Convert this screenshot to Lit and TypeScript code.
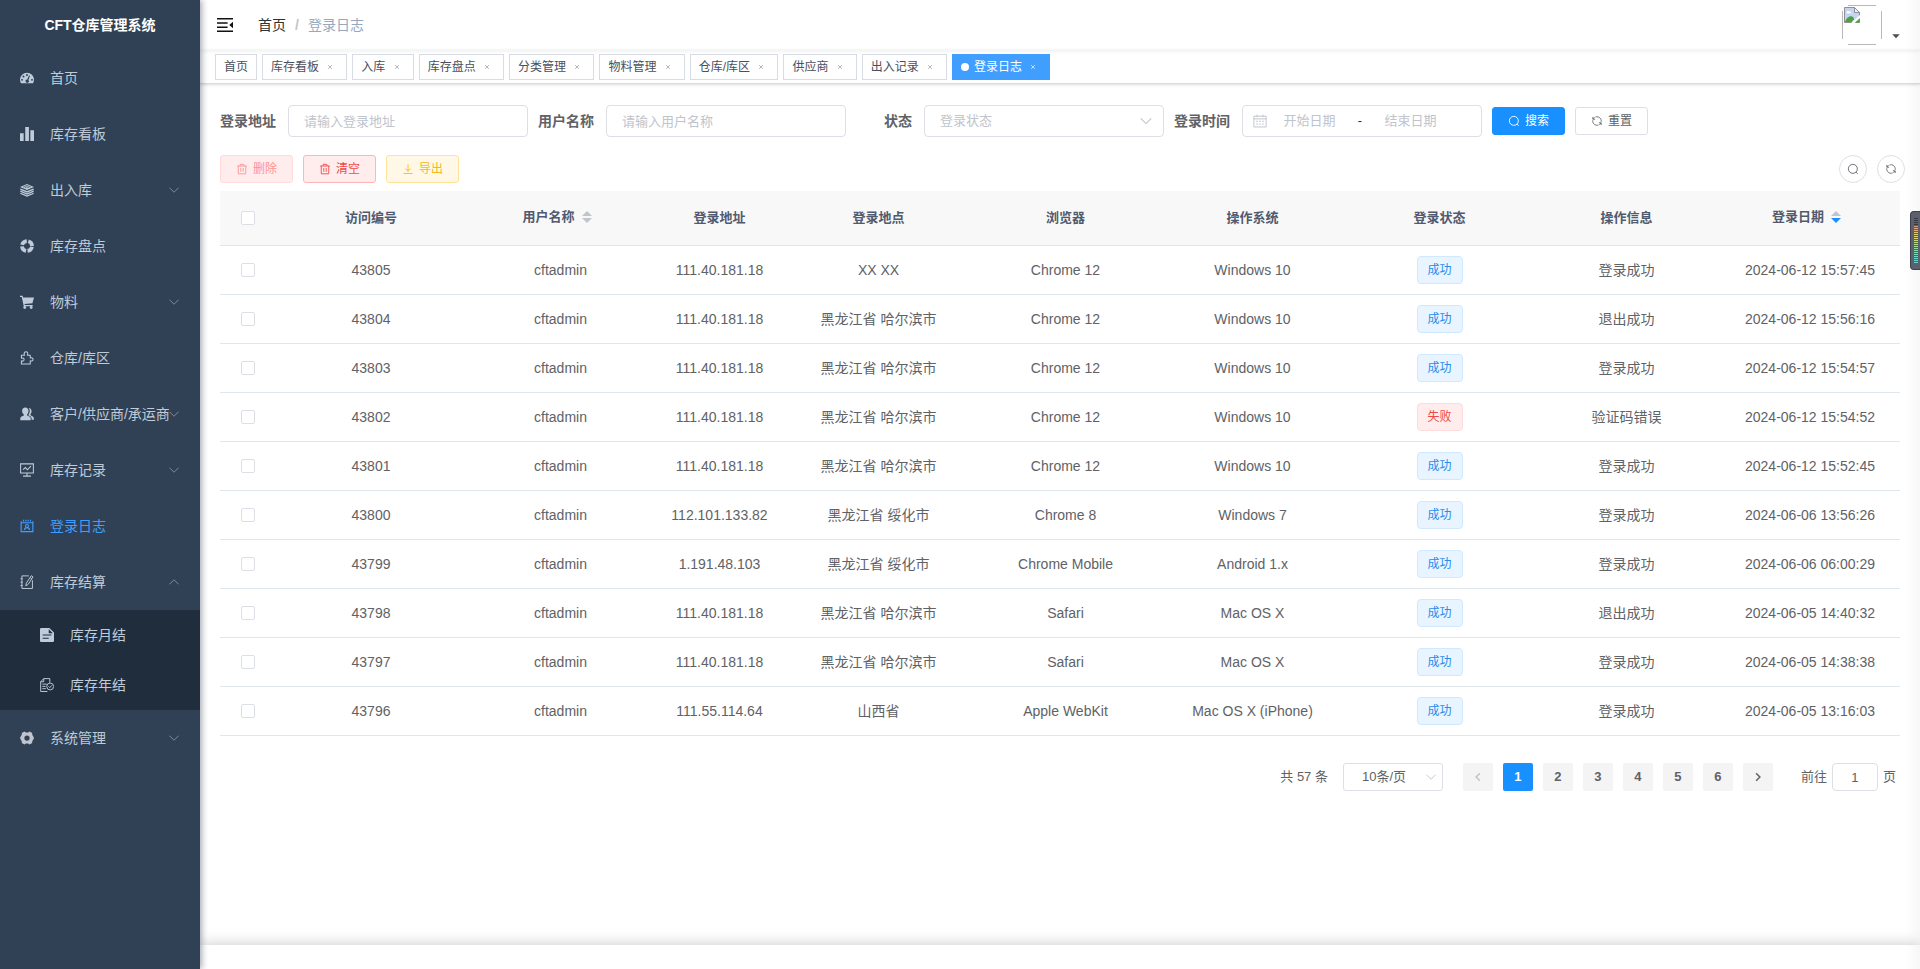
import { LitElement, html, css, svg, nothing } from 'lit';
import { customElement, state } from 'lit/decorators.js';
import { classMap } from 'lit/directives/class-map.js';

const icons: Record<string, unknown> = {
  dashboard: svg`<path fill="currentColor" fill-rule="evenodd" d="M8 2a8 8 0 0 0-8 8c0 1.500.4 2.800 1.100 4h13.800c.7-1.200 1.100-2.500 1.100-4a8 8 0 0 0-8-8zM8 3.400a1.100 1.100 0 1 1 0 2.200 1.100 1.100 0 0 1 0-2.200zM4 5.100a1.100 1.100 0 1 1 0 2.200 1.100 1.100 0 0 1 0-2.200zM2.300 9a1.100 1.100 0 1 1 0 2.200 1.100 1.100 0 0 1 0-2.200zM13.700 9a1.100 1.100 0 1 1 0 2.200 1.100 1.100 0 0 1 0-2.200zM10.300 5l1.100.5-1.800 4.700a1.900 1.900 0 1 1-1.300-.5z"/>`,
  bars: svg`<path fill="currentColor" d="M0 7h4.200v9H0zM6 0h4.200v16H6zM11.800 3.600H16V16h-4.200z"/>`,
  layers: svg`<path fill="currentColor" d="M8 1l8 3.500L8 8 0 4.500z"/><path fill="none" stroke="currentColor" stroke-width="1.500" d="M.4 6.900L8 10.200l7.600-3.300M.4 9.400L8 12.700l7.600-3.300M.4 11.700L8 15l7.600-3.300"/><path fill="none" stroke="#304156" stroke-width=".7" d="M3.500 4.600L8 2.700l4.500 1.900M5.500 5.500L8 4.400l2.500 1.100"/>`,
  ring: svg`<circle cx="8" cy="8" r="5.700" fill="none" stroke="currentColor" stroke-width="4.300" stroke-dasharray="7.150 1.800" stroke-dashoffset="-.9"/>`,
  cart: svg`<path fill="currentColor" d="M0 .8h3l.6 2H16l-1.800 6.600-9 .9.3 1.200h9v1.400H4.300L2 2.300H0z"/><circle cx="5.400" cy="14.300" r="1.600" fill="currentColor"/><circle cx="12.800" cy="14.300" r="1.600" fill="currentColor"/>`,
  puzzle: svg`<path fill="none" stroke="currentColor" stroke-width="1.200" stroke-linejoin="round" d="M1.600 4.800h3.600c-1.200-2 0-3.900 1.600-3.900s2.800 1.900 1.600 3.900h3.300v3.300c1.600-.9 3.200 0 3.200 1.500s-1.600 2.500-3.200 1.500v3.800H1.600v-3.600c2 .8 3.100-.2 3.100-1.500S3.600 7.500 1.600 8.200z"/>`,
  people: svg`<path fill="currentColor" d="M6 .5c2.300 0 3.700 1.700 3.700 4 0 1.700-.7 3-1.500 3.800v1.400l3 1.500c.8.400 1 1.200 1 2.400v1.600H.3v-1.600c0-1.200.3-2 1-2.400l3-1.500V8.300C3.200 7.500 2.400 6.200 2.400 4.500c0-2.300 1.400-4 3.600-4z"/><path fill="currentColor" d="M10 1.200c2 .1 3.200 1.700 3.200 3.700 0 1.500-.5 2.500-1.200 3.300v1.300l2.700 1.300c.9.500 1.100 1.300 1.100 2.800v1h-2.500c0-2.400-.3-3.400-1.500-4l-2-1V8.700c.8-.9 1.300-2.300 1.300-4 0-1.500-.4-2.700-1.100-3.500z"/>`,
  monitor: svg`<path fill="none" stroke="currentColor" stroke-width="1.200" d="M.7 1h14.600v10.400H.7zM8 11.400v3.200M3.500 15h9M3.500 7.700l2.700-2.500 2.300 2.600 4-4.300"/>`,
  logbook: svg`<path fill="none" stroke="currentColor" stroke-width="1.300" d="M1.300 2.500v12h13.400v-12M1.300 4.300h13.400M4 .8v2M6.700.8v2M9.300.8v2M12 .8v2M1.300 2.500v2M14.700 2.500v2"/><path fill="none" stroke="currentColor" stroke-width="1.300" d="M5 12.500c.3-1.800 1.400-2.700 3-2.700s2.700.900 3 2.700"/><circle cx="8" cy="7.900" r="1.700" fill="none" stroke="currentColor" stroke-width="1.200"/>`,
  edit: svg`<path fill="none" stroke="currentColor" stroke-width="1.100" d="M10 1H2.200v14.400h12V6M.6 4.300H3M.6 8.200H3M.6 12H3M12.900.8l2 1.400-5.600 8.500-2.700 1.700.6-3.100zM11.600 3l1.900 1.300"/>`,
  document: svg`<path fill="currentColor" fill-rule="evenodd" d="M1.500 0h9.200L16 5.200v9.300c0 .8-.7 1.500-1.500 1.500h-13C.7 16 0 15.300 0 14.500v-13C0 .7.700 0 1.500 0zM3 7.300v1.400h10V7.300zM3 11v1.400h7V11zM10 1.400V6h4.600z"/>`,
  docCheck: svg`<path fill="none" stroke="currentColor" stroke-width="1.100" d="M8.500 15.400H.8V4.300L4.300.7h6.900v4.600M4.300.7v3.600H.8M2.700 7h5M2.700 9.600h3.600M2.700 12.200h4"/><circle cx="11.600" cy="9.700" r="3.900" fill="none" stroke="currentColor" stroke-width="1.100"/><path fill="none" stroke="currentColor" stroke-width="1.100" d="M9.800 9.600l1.400 1.400 2.200-2.500"/>`,
  gear: svg`<path fill="#c0c4cc" fill-rule="evenodd" d="M5 .6l1.800 1.100h2.400L11 .6l2.900 1.600.1 2.200 1.200 2 .8 1.600-.8 1.600-1.200 2-.1 2.200-2.900 1.600-1.800-1.100H6.800L5 15.400l-2.900-1.600-.1-2.200-1.200-2L0 8l.8-1.600 1.200-2 .1-2.200zM8 5a3 3 0 1 0 0 6 3 3 0 0 0 0-6z"/>`,
  down: svg`<path fill="none" stroke="currentColor" stroke-width="1.200" d="M2 5l6 6 6-6"/>`,
  up: svg`<path fill="none" stroke="currentColor" stroke-width="1.200" d="M2 11l6-6 6 6"/>`,
  left: svg`<path fill="none" stroke="currentColor" stroke-width="2" d="M10.500 3L5.500 8l5 5"/>`,
  right: svg`<path fill="none" stroke="currentColor" stroke-width="2" d="M5.500 3l5 5-5 5"/>`,
  close: svg`<path fill="none" stroke="currentColor" stroke-width="1.800" d="M3 3l10 10M13 3L3 13"/>`,
  search: svg`<circle cx="7.800" cy="7.800" r="6" fill="none" stroke="currentColor" stroke-width="1.200"/><path stroke="currentColor" stroke-width="1.200" d="M11.800 12l2.500 2.500"/>`,
  refresh: svg`<path fill="none" stroke="currentColor" stroke-width="1.200" d="M6 2.700a5.700 5.700 0 0 1 7.600 6.300M10 13.300A5.700 5.700 0 0 1 2.400 7M2.500 2.600v3h3M13.500 13.400v-3h-3M2.600 5.500c.7-1.200 1.200-1.800 2.200-2.300M13.400 10.500c-.7 1.200-1.200 1.800-2.200 2.300"/>`,
  trash: svg`<path fill="none" stroke="currentColor" stroke-width="1.200" d="M1.500 4h13M5.500 4V1.800h5V4M3 4v10.400h10V4M6.400 6.700v5M9.600 6.700v5"/>`,
  download: svg`<path fill="none" stroke="currentColor" stroke-width="1.200" d="M8 2v9M4.300 7.300L8 11l3.700-3.700M2 14h12"/>`,
  calendar: svg`<path fill="none" stroke="currentColor" stroke-width="1.100" d="M1 2.500h14v12.300H1zM1 5.600h14M4.600.7v3M11.400.7v3M3.600 8.300h2M7 8.300h2M10.400 8.300h2M3.600 11.500h2M7 11.500h2M10.400 11.500h2"/>`,
  fold: svg`<path fill="currentColor" d="M0 1h16v1.600H0zM0 5.200h10.600v1.500H0zM0 9.400h10.600v1.500H0zM0 13.500h16v1.600H0zM16 4.800v6.400L12.300 8z"/>`,
  caret: svg`<path fill="currentColor" d="M3 5.500h10L8 11z"/>`,
};

const icon = (name: string, cls = '') =>
  html`<svg class="icon ${cls}" viewBox="0 0 16 16" aria-hidden="true">${icons[name]}</svg>`;

interface MenuItem {
  label: string;
  icon: string;
  active?: boolean;
  sub?: boolean;
  children?: MenuItem[];
}

const menu: MenuItem[] = [
  { label: '首页', icon: 'dashboard' },
  { label: '库存看板', icon: 'bars' },
  { label: '出入库', icon: 'layers', sub: true },
  { label: '库存盘点', icon: 'ring' },
  { label: '物料', icon: 'cart', sub: true },
  { label: '仓库/库区', icon: 'puzzle' },
  { label: '客户/供应商/承运商', icon: 'people', sub: true },
  { label: '库存记录', icon: 'monitor', sub: true },
  { label: '登录日志', icon: 'logbook', active: true },
  {
    label: '库存结算',
    icon: 'edit',
    sub: true,
    children: [
      { label: '库存月结', icon: 'document' },
      { label: '库存年结', icon: 'docCheck' },
    ],
  },
  { label: '系统管理', icon: 'gear', sub: true },
];

const tabs = ['首页', '库存看板', '入库', '库存盘点', '分类管理', '物料管理', '仓库/库区', '供应商', '出入记录', '登录日志'];

const HEB = '黑龙江省 哈尔滨市';
const SH = '黑龙江省 绥化市';

const logs: [string, string, string, string, string, boolean, string, string][] = [
  ['43805', '111.40.181.18', 'XX XX', 'Chrome 12', 'Windows 10', true, '登录成功', '2024-06-12 15:57:45'],
  ['43804', '111.40.181.18', HEB, 'Chrome 12', 'Windows 10', true, '退出成功', '2024-06-12 15:56:16'],
  ['43803', '111.40.181.18', HEB, 'Chrome 12', 'Windows 10', true, '登录成功', '2024-06-12 15:54:57'],
  ['43802', '111.40.181.18', HEB, 'Chrome 12', 'Windows 10', false, '验证码错误', '2024-06-12 15:54:52'],
  ['43801', '111.40.181.18', HEB, 'Chrome 12', 'Windows 10', true, '登录成功', '2024-06-12 15:52:45'],
  ['43800', '112.101.133.82', SH, 'Chrome 8', 'Windows 7', true, '登录成功', '2024-06-06 13:56:26'],
  ['43799', '1.191.48.103', SH, 'Chrome Mobile', 'Android 1.x', true, '登录成功', '2024-06-06 06:00:29'],
  ['43798', '111.40.181.18', HEB, 'Safari', 'Mac OS X', true, '退出成功', '2024-06-05 14:40:32'],
  ['43797', '111.40.181.18', HEB, 'Safari', 'Mac OS X', true, '登录成功', '2024-06-05 14:38:38'],
  ['43796', '111.55.114.64', '山西省', 'Apple WebKit', 'Mac OS X (iPhone)', true, '登录成功', '2024-06-05 13:16:03'],
];

const reset = css`
  * { box-sizing: border-box; }
  button, input, select { font: inherit; color: inherit; margin: 0; }
  button { cursor: pointer; }
  a { color: inherit; text-decoration: none; }
  .icon { width: 14px; height: 14px; flex: none; display: block; }
`;

@customElement('side-menu')
class SideMenu extends LitElement {
  static styles = [reset, css`
    :host { display: block; background: #304156; color: #bfcbd9; font-size: 14px; box-shadow: 2px 0 6px rgba(0, 21, 41, .35); }
    .logo { margin: 0; height: 50px; line-height: 50px; text-align: center; color: #fff; font-size: 14px; font-weight: bold; }
    ul { list-style: none; margin: 0; padding: 0; }
    .item { display: flex; align-items: center; width: 100%; height: 56px; padding: 0 20px; border: 0; background: none; white-space: nowrap; text-align: left; }
    .item .icon:first-child { margin-right: 16px; }
    .label { flex: 1; width: 0; line-height: 20px; }
    .arrow { width: 12px; height: 12px; color: #8492a2; }
    .active { color: #409eff; }
    .nested { background: #1f2d3d; }
    .nested .item { height: 50px; padding-left: 40px; }
  `];

  row(item: MenuItem): unknown {
    const body = html`${icon(item.icon)}<span class="label">${item.label}</span>`;
    return html`<li>
      ${item.sub
        ? html`<button class="item" type="button" aria-expanded=${item.children ? 'true' : 'false'}>
            ${body}${icon(item.children ? 'up' : 'down', 'arrow')}
          </button>`
        : html`<a class=${classMap({ item: true, active: !!item.active })} href="#">${body}</a>`}
      ${item.children ? html`<ul class="nested">${item.children.map((c) => this.row(c))}</ul>` : nothing}
    </li>`;
  }

  render() {
    return html`<h1 class="logo">CFT仓库管理系统</h1>
      <nav><ul>${menu.map((m) => this.row(m))}</ul></nav>`;
  }
}

@customElement('top-bar')
class TopBar extends LitElement {
  static styles = [reset, css`
    :host { display: block; position: relative; background: #fff; }
    .bar { display: flex; align-items: center; height: 50px; padding: 0 18px 0 17px; box-shadow: 0 1px 4px rgba(0, 21, 41, .08); }
    .fold { border: 0; background: none; padding: 0; color: #111; }
    .fold .icon { width: 16px; height: 16px; }
    .crumbs { display: flex; margin-left: 25px; font-size: 14px; line-height: 20px; color: #97a8be; }
    .crumbs a { color: #303133; }
    .sep { margin: 0 9px; color: #c0c4cc; font-weight: bold; }
    .user { display: flex; align-items: flex-end; gap: 8px; height: 40px; margin-left: auto; border: 0; padding: 0; background: none; color: #4a4f57; }
    .avatar { width: 40px; height: 40px; }
    .user .icon { width: 12px; height: 12px; margin-bottom: 3px; }
    .tabs { display: flex; gap: 5px; height: 34px; padding: 4px 15px 0; border-bottom: 1px solid #d8dce5; box-shadow: 0 1px 3px rgba(0, 0, 0, .12), 0 0 3px rgba(0, 0, 0, .04); }
    .tab { display: flex; align-items: center; height: 26px; padding: 0 8px; border: 1px solid #d8dce5; color: #495060; font-size: 12px; line-height: 24px; }
    .tab a { white-space: pre; }
    .tab.on { background: #409eff; border-color: #409eff; color: #fff; }
    .dot { width: 8px; height: 8px; margin-right: 5px; border-radius: 50%; background: #fff; }
    .x { display: grid; place-items: center; width: 16px; height: 16px; padding: 0; border: 0; background: none; color: #8f949e; }
    .on .x { color: #fff; }
    .x .icon { width: 6px; height: 6px; }
  `];

  render() {
    return html`
      <header class="bar">
        <button class="fold" type="button" aria-label="收起菜单">${icon('fold')}</button>
        <nav class="crumbs"><a href="#">首页</a><span class="sep">/</span><span>登录日志</span></nav>
        <button class="user" type="button" aria-label="用户">
          <svg class="avatar" viewBox="0 0 40 40" aria-hidden="true">
            <path d="M6 .5h28M6 39.500h28M.5 6v28M39.500 6v28" stroke="#b8b8b8" fill="none"/>
            <path d="M2.500 2.500h10l5 5v10h-15z" fill="#c4d5f4" stroke="#909090"/>
            <path d="M4.500 7.500c0-1.500 2-2 2.600-.9 1.300-.5 2.400.4 2.200 1.600H4.700z" fill="#fff"/>
            <path d="M3 17c1-4 4.500-6.500 7-5.500 1.500.6 2 1.700 2 3L9.500 17z" fill="#4aa33f"/>
            <path d="M17.500 12.500v5h-5z" fill="#4aa33f"/>
            <path d="M8.500 18.500L18.500 9.500v3L12 18.500z" fill="#fff"/>
            <path d="M12.500 2.500v5h5z" fill="#f2f2f2" stroke="#909090"/>
          </svg>
          ${icon('caret')}
        </button>
      </header>
      <nav class="tabs">
        ${tabs.map((t, i) => {
          const on = i === tabs.length - 1;
          return html`<div class=${classMap({ tab: true, on })}>
            ${on ? html`<span class="dot"></span>` : nothing}<a href="#">${i ? `${t} ` : t}</a>
            ${i ? html`<button class="x" type="button" aria-label="关闭${t}">${icon('close')}</button>` : nothing}
          </div>`;
        })}
      </nav>`;
  }
}

@customElement('log-page')
class LogPage extends LitElement {
  @state() private page = 1;

  static styles = [reset, css`
    :host { display: block; padding: 21px 20px 0; color: #606266; font-size: 14px; line-height: 18px; }
    .filters { display: flex; flex-wrap: wrap; align-items: center; gap: 10px; margin-bottom: 18px; }
    .field { display: flex; align-items: center; }
    .field > label, .legend { width: 68px; padding-right: 12px; text-align: right; font-weight: bold; white-space: nowrap; }
    .box { width: 240px; height: 32px; border: 1px solid #dcdfe6; border-radius: 4px; background: #fff; font-size: 13px; }
    input.box, select.box { padding: 0 15px; outline: 0; }
    ::placeholder { color: #c0c4cc; opacity: 1; }
    .pick { display: grid; align-items: center; }
    .pick > * { grid-area: 1 / 1; }
    .pick select { appearance: none; color: #c0c4cc; }
    .pick .icon { justify-self: end; margin-right: 11px; color: #c0c4cc; pointer-events: none; }
    .range { display: flex; align-items: center; padding: 0 10px; color: #303133; }
    .range .icon { color: #c0c4cc; }
    .range input { width: 85px; border: 0; padding: 0; outline: 0; background: none; text-align: center; }
    .range span { width: 16px; text-align: center; }
    .btns { display: flex; gap: 10px; }
    .btn { display: inline-flex; align-items: center; gap: 5px; height: 28px; padding: 0 15px; border: 1px solid #dcdfe6; border-radius: 3px; background: #fff; font-size: 12px; line-height: 12px; white-space: nowrap; }
    .btn .icon, .round .icon { width: 12px; height: 12px; }
    .primary { background: #1890ff; border-color: #1890ff; color: #fff; }
    .danger { background: #ffeded; border-color: #ffb6b6; color: #f04747; }
    .danger:disabled { border-color: #ffdbdb; color: #ff9292; }
    .warning { background: #fff8e6; border-color: #ffe399; color: #f5b81a; }
    .tools { display: flex; justify-content: space-between; margin: 0 -5px 8px 0; }
    .round { display: grid; place-items: center; width: 28px; height: 28px; padding: 0; border: 1px solid #dcdfe6; border-radius: 50%; background: #fff; }
    table { width: 100%; table-layout: fixed; border-collapse: separate; border-spacing: 0; text-align: center; }
    th, td { padding: 0 10px; border-bottom: 1px solid #dfe6ec; white-space: nowrap; }
    th { height: 55px; background: #f8f8f9; color: #515a6e; font-size: 13px; }
    td { height: 49px; }
    .c-check { width: 55px; }
    .c-id { width: 192px; }
    .c-ip { width: 131px; }
    .c-date { width: 180px; }
    .check { display: block; appearance: none; width: 14px; height: 14px; margin: 0 auto; border: 1px solid #dcdfe6; border-radius: 2px; background: #fff; }
    .sort { display: inline-flex; align-items: center; gap: 7px; padding: 0 7px 3px 0; border: 0; background: none; font-weight: bold; }
    .sort svg { width: 10px; height: 12px; display: block; }
    .up, .dn { fill: #c0c4cc; }
    .desc .dn { fill: #1890ff; }
    .tag { display: block; width: 46px; height: 28px; margin: 0 auto; border: 1px solid #d1e9ff; border-radius: 4px; background: #e8f4ff; color: #2a8ceb; font-size: 12px; line-height: 26px; }
    .tag.fail { border-color: #ffdbdb; background: #ffeded; color: #f04747; }
    .pages { display: flex; justify-content: flex-end; align-items: center; margin: 27px 4px 32px 0; font-size: 13px; }
    .size { margin: 0 20px 0 15px; }
    .size select { width: 100px; height: 28px; border-radius: 3px; padding: 0 24px 0 18px; color: #606266; text-align: left; }
    .size .icon { width: 12px; height: 12px; margin-right: 6px; }
    .pager { display: flex; gap: 10px; }
    .pg { display: grid; place-items: center; width: 30px; height: 28px; padding: 0; border: 0; border-radius: 2px; background: #f4f4f5; font-weight: bold; }
    .pg .icon { width: 12px; height: 12px; }
    .pg:disabled { color: #c0c4cc; }
    .pg.on { background: #1890ff; color: #fff; }
    .jump { display: flex; align-items: center; gap: 5px; margin-left: 28px; }
    .jump .box { width: 46px; height: 28px; padding: 0 3px; text-align: center; }
  `];

  sorter(label: string, desc = false) {
    return html`<button type="button" class=${classMap({ sort: true, desc })}>${label}
      <svg viewBox="0 0 10 12" aria-hidden="true"><path class="up" d="M5 0l5 5H0z"/><path class="dn" d="M0 7h10l-5 5z"/></svg>
    </button>`;
  }

  render() {
    return html`
      <form class="filters" @submit=${(e: Event) => e.preventDefault()}>
        <div class="field"><label for="ip">登录地址</label><input id="ip" class="box" placeholder="请输入登录地址" /></div>
        <div class="field"><label for="user">用户名称</label><input id="user" class="box" placeholder="请输入用户名称" /></div>
        <div class="field">
          <label for="status">状态</label>
          <div class="pick">
            <select id="status" class="box"><option value="">登录状态</option><option>成功</option><option>失败</option></select>
            ${icon('down')}
          </div>
        </div>
        <div class="field" role="group" aria-labelledby="time">
          <span class="legend" id="time">登录时间</span>
          <div class="box range">
            ${icon('calendar')}
            <input placeholder="开始日期" aria-label="开始日期" /><span>-</span><input placeholder="结束日期" aria-label="结束日期" />
          </div>
        </div>
        <div class="btns">
          <button class="btn primary">${icon('search')}搜索</button>
          <button class="btn" type="reset">${icon('refresh')}重置</button>
        </div>
      </form>

      <div class="tools">
        <div class="btns">
          <button class="btn danger" type="button" disabled>${icon('trash')}删除</button>
          <button class="btn danger" type="button">${icon('trash')}清空</button>
          <button class="btn warning" type="button">${icon('download')}导出</button>
        </div>
        <div class="btns">
          <button class="round" type="button" aria-label="隐藏搜索">${icon('search')}</button>
          <button class="round" type="button" aria-label="刷新">${icon('refresh')}</button>
        </div>
      </div>

      <table>
        <thead>
          <tr>
            <th class="c-check"><input class="check" type="checkbox" aria-label="全选" /></th>
            <th class="c-id">访问编号</th>
            <th>${this.sorter('用户名称')}</th>
            <th class="c-ip">登录地址</th>
            <th>登录地点</th>
            <th>浏览器</th>
            <th>操作系统</th>
            <th>登录状态</th>
            <th>操作信息</th>
            <th class="c-date">${this.sorter('登录日期', true)}</th>
          </tr>
        </thead>
        <tbody>
          ${logs.map(([id, ip, place, browser, os, ok, msg, date]) => html`<tr>
            <td><input class="check" type="checkbox" aria-label="选择 ${id}" /></td>
            <td>${id}</td><td>cftadmin</td><td>${ip}</td><td>${place}</td><td>${browser}</td><td>${os}</td>
            <td><span class=${classMap({ tag: true, fail: !ok })}>${ok ? '成功' : '失败'}</span></td>
            <td>${msg}</td><td>${date}</td>
          </tr>`)}
        </tbody>
      </table>

      <nav class="pages">
        <span>共 57 条</span>
        <div class="pick size">
          <select class="box" aria-label="每页条数"><option>10条/页</option><option>20条/页</option></select>
          ${icon('down')}
        </div>
        <div class="pager">
          <button class="pg" type="button" aria-label="上一页" ?disabled=${this.page === 1} @click=${() => this.page--}>${icon('left')}</button>
          ${[1, 2, 3, 4, 5, 6].map((n) => html`<button type="button" class=${classMap({ pg: true, on: n === this.page })} @click=${() => (this.page = n)}>${n}</button>`)}
          <button class="pg" type="button" aria-label="下一页" ?disabled=${this.page === 6} @click=${() => this.page++}>${icon('right')}</button>
        </div>
        <div class="jump"><label for="jump">前往</label><input id="jump" class="box" .value=${String(this.page)} /><span>页</span></div>
      </nav>`;
  }
}

@customElement('app-root')
class AppRoot extends LitElement {
  static styles = [reset, css`
    :host { display: grid; grid-template-columns: 200px minmax(0, 1fr); min-height: 100vh; position: relative; overflow: hidden; background: #fff; font-family: "Liberation Sans", "Noto Sans CJK SC", sans-serif; }
    side-menu { position: relative; z-index: 2; }
    .main { display: flex; flex-direction: column; }
    log-page { flex: 1; }
    .foot { height: 24px; background: #fff; box-shadow: 0 0 15px rgba(0, 10, 40, .22); }
    .edge { position: absolute; top: 0; right: 0; bottom: 0; width: 15px; background: linear-gradient(to right, rgba(0, 0, 0, 0), rgba(0, 0, 0, .03)); pointer-events: none; }
    .meter { position: absolute; top: 211px; right: 0; width: 10px; height: 59px; padding: 6px 2px 6px 3px; border: 1px solid #3d404b; border-right: 0; border-radius: 4px 0 0 4px; background: #5b5f6e; }
    .meter svg { display: block; width: 4px; height: 45px; }
  `];

  render() {
    const colours = ['#343842', '#343842', '#343842', '#343842', '#e0997c', '#e3a578', '#e2b374', '#e2c072', '#e2cb72', '#dfd274', '#d6d878', '#c9da7d', '#bcdc84', '#addd8c', '#9edd95', '#92dd9e', '#86dca8', '#7cdbb3', '#74dabd', '#6fd9c6', '#6ad8cc', '#66d6d0', '#62d4d4'];
    return html`
      <side-menu></side-menu>
      <div class="main">
        <top-bar></top-bar>
        <log-page></log-page>
        <footer class="foot"></footer>
      </div>
      <div class="edge"></div>
      <div class="meter">
        <svg viewBox="0 0 4 45" aria-hidden="true">${colours.map((c, i) => svg`<rect y=${i * 2} width="4" height="1" fill=${c}></rect>`)}</svg>
      </div>`;
  }
}
